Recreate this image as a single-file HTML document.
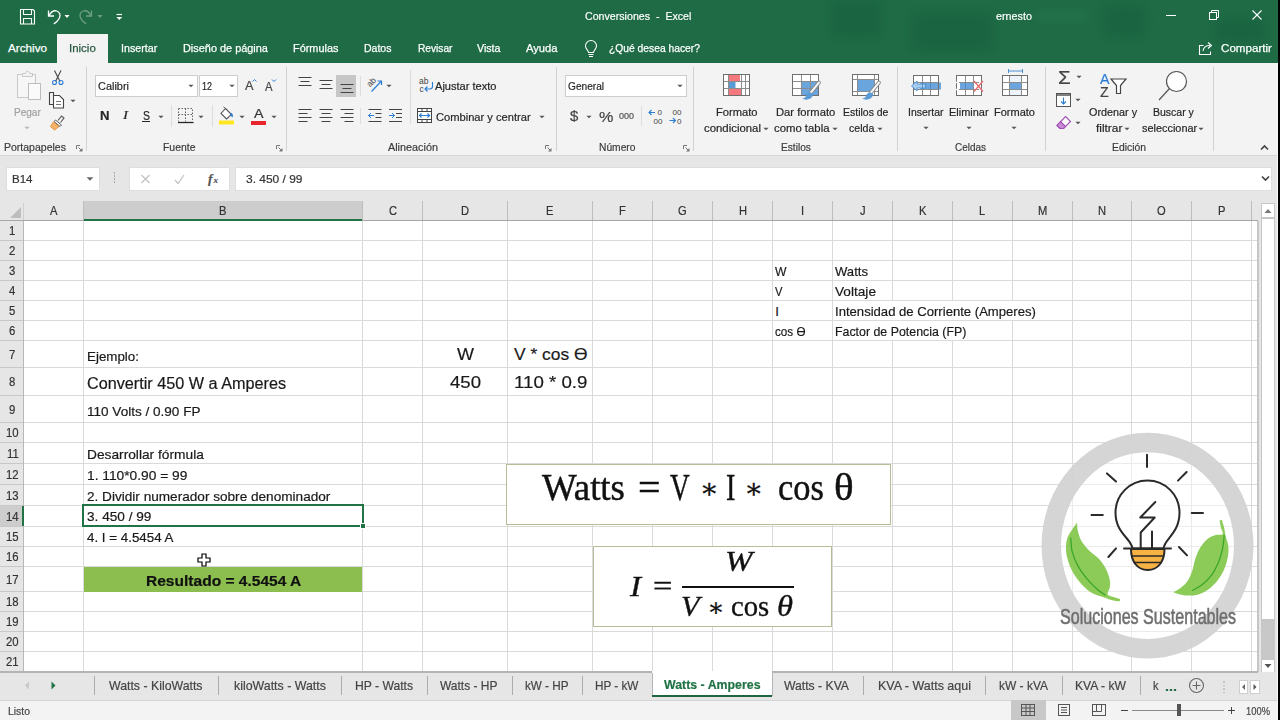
<!DOCTYPE html>
<html lang="es"><head><meta charset="utf-8"><title>Conversiones - Excel</title>
<style>
html,body{margin:0;padding:0;}
body{width:1280px;height:720px;overflow:hidden;position:relative;background:#e6e6e6;font-family:"Liberation Sans",sans-serif;}
.t{position:absolute;white-space:pre;transform-origin:0 50%;-webkit-text-stroke-width:.2px;}
.b{position:absolute;}
svg{position:absolute;overflow:visible;}
</style></head><body>

<!-- title bar -->
<div class="b" style="left:0px;top:0px;width:1280px;height:63px;background:#1e6b45;"></div>
<svg style="left:0;top:0" width="1280" height="63" viewBox="0 0 1280 63"><defs><filter id="tb"><feGaussianBlur stdDeviation="4"/></filter></defs><g filter="url(#tb)" fill="#17553a" opacity=".3"><rect x="832" y="2" width="48" height="34"/><rect x="912" y="14" width="80" height="36"/><rect x="1105" y="6" width="40" height="30"/><rect x="1215" y="20" width="50" height="22"/></g><rect x="1036" y="9" width="52" height="14" fill="#2a7a53" opacity=".35" filter="url(#tb)"/></svg>
<span class="t" style="left:585.0px;top:8.6px;font-size:11.7px;line-height:14px;color:#fff;font-family:'Liberation Sans',sans-serif;transform:scaleX(0.910);">Conversiones  -  Excel</span>
<span class="t" style="left:995.5px;top:8.6px;font-size:11.7px;line-height:14px;color:#fff;font-family:'Liberation Sans',sans-serif;transform:scaleX(0.922);">ernesto</span>
<svg style="left:0;top:0" width="140" height="32" viewBox="0 0 140 32" fill="none" stroke="#fff" stroke-width="1.1">
<path d="M20.5 9.5h12.5l1.5 1.5v13h-14z"/><path d="M23.5 9.5v5h8v-5"/><path d="M23.5 24v-5.5h8V24"/>
<path d="M48.5 10.5v5.5h5.5" stroke-width="1.3"/><path d="M48.8 15.8c2-3.6 5.2-5.6 8-4.8 3 .9 4 4.200 2.500 7.300-1 2.100-3 4-5.500 5.600" stroke-width="1.3"/>
<path d="M64.500 15l2.500 3 2.500-3z" fill="#fff" stroke="none"/>
<g opacity=".35"><path d="M91.500 10.500v5.500h-5.500" stroke-width="1.300"/><path d="M91.200 15.800c-2-3.600-5.200-5.600-8-4.800-3 .9-4 4.200-2.500 7.300 1 2.100 3 4 5.500 5.600" stroke-width="1.3"/><path d="M97.500 15l2.500 3 2.500-3z" fill="#fff" stroke="none"/></g>
<path d="M116.500 14.500h5.500" stroke-width="1.2"/><path d="M116.300 17l3 3 3-3z" fill="#fff" stroke="none"/>
</svg>
<svg style="left:1150px;top:-1px" width="130" height="32" viewBox="0 0 130 32" fill="none" stroke="#fff" stroke-width="1">
<path d="M16 16.500h10"/>
<rect x="59.500" y="13.500" width="7" height="7"/><path d="M61.500 13.500v-2h7v7h-2"/>
<path d="M102.500 11.500l9 9M111.500 11.500l-9 9" stroke-width="1.1"/>
</svg>
<div class="b" style="left:57px;top:34px;width:51px;height:30px;background:#f3f3f3;"></div>
<span class="t" style="left:8.0px;top:41.2px;font-size:11.7px;line-height:14px;color:#fff;font-family:'Liberation Sans',sans-serif;-webkit-text-stroke:.25px #fff;">Archivo</span>
<span class="t" style="left:68.7px;top:41.2px;font-size:11.7px;line-height:14px;color:#2a5a43;font-family:'Liberation Sans',sans-serif;transform:scaleX(0.981);-webkit-text-stroke:.25px #2a5a43;">Inicio</span>
<span class="t" style="left:120.7px;top:41.2px;font-size:11.7px;line-height:14px;color:#fff;font-family:'Liberation Sans',sans-serif;transform:scaleX(0.915);-webkit-text-stroke:.25px #fff;">Insertar</span>
<span class="t" style="left:182.5px;top:41.2px;font-size:11.7px;line-height:14px;color:#fff;font-family:'Liberation Sans',sans-serif;transform:scaleX(0.933);-webkit-text-stroke:.25px #fff;">Diseño de página</span>
<span class="t" style="left:293.0px;top:41.2px;font-size:11.7px;line-height:14px;color:#fff;font-family:'Liberation Sans',sans-serif;transform:scaleX(0.933);-webkit-text-stroke:.25px #fff;">Fórmulas</span>
<span class="t" style="left:364.0px;top:41.2px;font-size:11.7px;line-height:14px;color:#fff;font-family:'Liberation Sans',sans-serif;transform:scaleX(0.900);-webkit-text-stroke:.25px #fff;">Datos</span>
<span class="t" style="left:417.5px;top:41.2px;font-size:11.7px;line-height:14px;color:#fff;font-family:'Liberation Sans',sans-serif;transform:scaleX(0.870);-webkit-text-stroke:.25px #fff;">Revisar</span>
<span class="t" style="left:477.0px;top:41.2px;font-size:11.7px;line-height:14px;color:#fff;font-family:'Liberation Sans',sans-serif;transform:scaleX(0.911);-webkit-text-stroke:.25px #fff;">Vista</span>
<span class="t" style="left:526.0px;top:41.2px;font-size:11.7px;line-height:14px;color:#fff;font-family:'Liberation Sans',sans-serif;transform:scaleX(0.956);-webkit-text-stroke:.25px #fff;">Ayuda</span>
<span class="t" style="left:609.0px;top:41.2px;font-size:11.7px;line-height:14px;color:#fff;font-family:'Liberation Sans',sans-serif;transform:scaleX(0.880);-webkit-text-stroke:.25px #fff;">¿Qué desea hacer?</span>
<span class="t" style="left:1221.0px;top:41.2px;font-size:11.7px;line-height:14px;color:#fff;font-family:'Liberation Sans',sans-serif;transform:scaleX(0.993);-webkit-text-stroke:.25px #fff;">Compartir</span>
<svg style="left:583px;top:38px" width="16" height="22" viewBox="0 0 16 22" fill="none" stroke="#fff" stroke-width="1.1">
<path d="M5.500 14.500c0-2-3-3.500-3-6.500a5.500 5.500 0 0 1 11 0c0 3-3 4.500-3 6.500z"/><path d="M5.500 16.500h5M6 18.500h4"/></svg>
<svg style="left:1198px;top:40px" width="17" height="16" viewBox="0 0 17 16" fill="none" stroke="#fff" stroke-width="1.1">
<path d="M5.500 5.500h-4v9h11v-3"/><path d="M5 11c.5-3.500 3-5.500 7-5.500"/><path d="M10 2.500l3.500 3-3.500 3"/></svg>
<!-- ribbon -->
<div class="b" style="left:0px;top:63px;width:1280px;height:92px;background:#f3f3f3;"></div>
<div class="b" style="left:0px;top:155px;width:1280px;height:1px;background:#d6d6d6;"></div>
<div class="b" style="left:86px;top:67px;width:1px;height:84px;background:#d2d2d2;"></div>
<div class="b" style="left:286px;top:67px;width:1px;height:84px;background:#d2d2d2;"></div>
<div class="b" style="left:556px;top:67px;width:1px;height:84px;background:#d2d2d2;"></div>
<div class="b" style="left:693px;top:67px;width:1px;height:84px;background:#d2d2d2;"></div>
<div class="b" style="left:897px;top:67px;width:1px;height:84px;background:#d2d2d2;"></div>
<div class="b" style="left:1045px;top:67px;width:1px;height:84px;background:#d2d2d2;"></div>
<div class="b" style="left:1213px;top:67px;width:1px;height:84px;background:#d2d2d2;"></div>
<div class="b" style="left:171px;top:105px;width:1px;height:22px;background:#dcdcdc;"></div>
<div class="b" style="left:212px;top:105px;width:1px;height:22px;background:#dcdcdc;"></div>
<div class="b" style="left:360px;top:76px;width:1px;height:20px;background:#dcdcdc;"></div>
<div class="b" style="left:360px;top:108px;width:1px;height:16px;background:#dcdcdc;"></div>
<div class="b" style="left:410px;top:70px;width:1px;height:54px;background:#dcdcdc;"></div>
<div class="b" style="left:641px;top:106px;width:1px;height:20px;background:#dcdcdc;"></div>
<span class="t" style="left:4.0px;top:140.1px;font-size:11.7px;line-height:14px;color:#3b3b3b;font-family:'Liberation Sans',sans-serif;transform:scaleX(0.899);">Portapapeles</span>
<span class="t" style="left:162.5px;top:140.1px;font-size:11.7px;line-height:14px;color:#3b3b3b;font-family:'Liberation Sans',sans-serif;transform:scaleX(0.892);">Fuente</span>
<span class="t" style="left:388.0px;top:140.1px;font-size:11.7px;line-height:14px;color:#3b3b3b;font-family:'Liberation Sans',sans-serif;transform:scaleX(0.926);">Alineación</span>
<span class="t" style="left:598.5px;top:140.1px;font-size:11.7px;line-height:14px;color:#3b3b3b;font-family:'Liberation Sans',sans-serif;transform:scaleX(0.877);">Número</span>
<span class="t" style="left:780.8px;top:140.1px;font-size:11.7px;line-height:14px;color:#3b3b3b;font-family:'Liberation Sans',sans-serif;transform:scaleX(0.868);">Estilos</span>
<span class="t" style="left:955.0px;top:140.1px;font-size:11.7px;line-height:14px;color:#3b3b3b;font-family:'Liberation Sans',sans-serif;transform:scaleX(0.851);">Celdas</span>
<span class="t" style="left:1112.0px;top:140.1px;font-size:11.7px;line-height:14px;color:#3b3b3b;font-family:'Liberation Sans',sans-serif;transform:scaleX(0.886);">Edición</span>
<svg style="left:76px;top:144.5px" width="7" height="7" viewBox="0 0 7 7" fill="none" stroke="#777" stroke-width="1"><path d="M.5 4v-3.500h3.500"/><path d="M2.500 2.500l3.500 3.500"/><path d="M6.500 3v3.500h-3.500z" fill="#777" stroke="none"/></svg>
<svg style="left:276px;top:144.5px" width="7" height="7" viewBox="0 0 7 7" fill="none" stroke="#777" stroke-width="1"><path d="M.5 4v-3.500h3.500"/><path d="M2.500 2.500l3.500 3.500"/><path d="M6.500 3v3.500h-3.500z" fill="#777" stroke="none"/></svg>
<svg style="left:545px;top:144.5px" width="7" height="7" viewBox="0 0 7 7" fill="none" stroke="#777" stroke-width="1"><path d="M.5 4v-3.500h3.500"/><path d="M2.500 2.500l3.500 3.500"/><path d="M6.500 3v3.500h-3.500z" fill="#777" stroke="none"/></svg>
<svg style="left:683px;top:144.5px" width="7" height="7" viewBox="0 0 7 7" fill="none" stroke="#777" stroke-width="1"><path d="M.5 4v-3.500h3.500"/><path d="M2.500 2.500l3.500 3.500"/><path d="M6.500 3v3.500h-3.500z" fill="#777" stroke="none"/></svg>
<span class="t" style="left:13.7px;top:104.6px;font-size:11.7px;line-height:14px;color:#a0a0a0;font-family:'Liberation Sans',sans-serif;transform:scaleX(0.858);">Pegar</span>
<svg style="left:23px;top:124.5px" width="8" height="6" viewBox="-4 -3 8 6"><path d="M-2.6 -1.3h5.2l-2.6 2.6z" fill="#b5b5b5"/></svg>
<svg style="left:14px;top:68px" width="30" height="34" viewBox="0 0 30 34" fill="none">
<rect x="3.500" y="6.500" width="18" height="23" fill="#f6f6f6" stroke="#c8c8c8"/><path d="M8.500 8.500v-3h3c0-3 4-3 4 0h3v3z" fill="#f3f3f3" stroke="#c8c8c8"/>
<rect x="14.500" y="15.500" width="12" height="16" fill="#fafafa" stroke="#bdbdbd"/></svg>
<svg style="left:50px;top:68px" width="16" height="18" viewBox="0 0 16 18" fill="none" stroke="#444" stroke-width="1.1">
<path d="M4.500 2.500l5.500 11M11 2.500l-5.500 11"/><circle cx="4.500" cy="14.500" r="2" stroke="#2b7cd3"/><circle cx="11" cy="14.500" r="2" stroke="#2b7cd3"/></svg>
<svg style="left:48px;top:90px" width="18" height="20" viewBox="0 0 18 20" fill="none" stroke="#444" stroke-width="1.1">
<path d="M5.500 5.500v-3h-4v12h4"/><path d="M5.500 5.500h6l4 4v8.500h-10z" fill="#fff"/><path d="M8 11.500h5M8 14.500h5" stroke="#777"/></svg>
<svg style="left:68.5px;top:97.5px" width="8" height="6" viewBox="-4 -3 8 6"><path d="M-2.6 -1.3h5.2l-2.6 2.6z" fill="#555"/></svg>
<svg style="left:49px;top:114px" width="18" height="18" viewBox="0 0 18 18" fill="none">
<path d="M9 6.500l3.500-4.500 2.500 2-3.500 4.500" stroke="#555" stroke-width="1.100"/><path d="M6.500 6l6 5-1.500 1.500-6-5z" fill="#fff" stroke="#555"/><path d="M4.500 8l5.500 4.500-4.500 3.500-4-3.500z" fill="#f5b46b" stroke="#e8913a"/></svg>
<div class="b" style="left:95px;top:74.5px;width:102.5px;height:22px;background:#fff;border:1px solid #cdcdcd;box-sizing:border-box;"></div>
<div class="b" style="left:198.5px;top:74.5px;width:39.5px;height:22px;background:#fff;border:1px solid #cdcdcd;box-sizing:border-box;"></div>
<span class="t" style="left:98.0px;top:78.6px;font-size:11.7px;line-height:14px;color:#262626;font-family:'Liberation Sans',sans-serif;transform:scaleX(0.935);">Calibri</span>
<span class="t" style="left:202.0px;top:78.6px;font-size:11.7px;line-height:14px;color:#262626;font-family:'Liberation Sans',sans-serif;transform:scaleX(0.768);">12</span>
<svg style="left:187px;top:82.5px" width="8" height="6" viewBox="-4 -3 8 6"><path d="M-2.6 -1.3h5.2l-2.6 2.6z" fill="#555"/></svg>
<svg style="left:227.5px;top:82.5px" width="8" height="6" viewBox="-4 -3 8 6"><path d="M-2.6 -1.3h5.2l-2.6 2.6z" fill="#555"/></svg>
<span class="t" style="left:244.5px;top:78.2px;font-size:13.5px;line-height:16px;color:#444;font-family:'Liberation Sans',sans-serif;transform:scaleX(0.944);">A</span>
<span class="t" style="left:264.5px;top:79.6px;font-size:12px;line-height:14px;color:#444;font-family:'Liberation Sans',sans-serif;transform:scaleX(0.937);">A</span>
<svg style="left:252px;top:78px" width="26" height="8" viewBox="0 0 26 8" fill="none" stroke="#2b7cd3" stroke-width="1"><path d="M.5 3.500l2-2 2 2"/><path d="M20 1.500l2 2 2-2"/></svg>
<span class="t" style="left:99.5px;top:107.6px;font-size:13px;line-height:16px;color:#262626;font-family:'Liberation Sans',sans-serif;font-weight:bold;transform:scaleX(1.012);">N</span>
<span class="t" style="left:123.0px;top:107.4px;font-size:13.5px;line-height:16px;color:#262626;font-family:'Liberation Serif',serif;font-style:italic;transform:scaleX(1.112);">I</span>
<span class="t" style="left:142.5px;top:107.6px;font-size:13px;line-height:16px;color:#262626;font-family:'Liberation Sans',sans-serif;transform:scaleX(0.807);">S</span>
<div class="b" style="left:142px;top:120.8px;width:8px;height:1px;background:#262626;"></div>
<svg style="left:157px;top:113.5px" width="8" height="6" viewBox="-4 -3 8 6"><path d="M-2.6 -1.3h5.2l-2.6 2.6z" fill="#555"/></svg>
<svg style="left:178px;top:108px" width="16" height="16" viewBox="0 0 16 16" fill="none" stroke="#666" stroke-width="1" stroke-dasharray="1.500 1.500">
<path d="M.5 .5h14v12.500M.5 .5v13M7.500 .5v13M.5 6.500h14"/><path d="M0 14.500h15.500" stroke="#262626" stroke-dasharray="none" stroke-width="1.300"/></svg>
<svg style="left:197px;top:113.5px" width="8" height="6" viewBox="-4 -3 8 6"><path d="M-2.6 -1.3h5.2l-2.6 2.6z" fill="#555"/></svg>
<svg style="left:218px;top:106px" width="18" height="20" viewBox="0 0 18 20" fill="none">
<path d="M7.500 2.500l6 6-5 4.500-5.500-5.500z" fill="#fff" stroke="#555" stroke-width="1.100"/><path d="M7.500 2.500l-2-1.500" stroke="#555"/><path d="M12.500 7c2 0 3 2 2 4.500-1-1-2-2-2.500-3.500z" fill="#2b7cd3"/><rect x="1" y="14.500" width="15" height="4" fill="#ffe522"/></svg>
<svg style="left:237.5px;top:113.5px" width="8" height="6" viewBox="-4 -3 8 6"><path d="M-2.6 -1.3h5.2l-2.6 2.6z" fill="#555"/></svg>
<span class="t" style="left:254.0px;top:105.7px;font-size:13.5px;line-height:16px;color:#333;font-family:'Liberation Sans',sans-serif;transform:scaleX(1.055);">A</span>
<div class="b" style="left:251px;top:120.5px;width:15px;height:4px;background:#e8262d;"></div>
<svg style="left:269.5px;top:113.5px" width="8" height="6" viewBox="-4 -3 8 6"><path d="M-2.6 -1.3h5.2l-2.6 2.6z" fill="#555"/></svg>
<div class="b" style="left:336px;top:75px;width:20px;height:22px;background:#c6c6c6;"></div>
<svg style="left:298px;top:76px" width="16" height="16" viewBox="0 0 16 16" fill="none" stroke="#444" stroke-width="1"><path d="M0.5 1.5h13M2.5 5.5h9M0.5 9.5h13"/></svg>
<svg style="left:319px;top:79px" width="16" height="16" viewBox="0 0 16 16" fill="none" stroke="#444" stroke-width="1"><path d="M0.5 1.5h13M2.5 5.5h9M0.5 9.5h13"/></svg>
<svg style="left:339.5px;top:83px" width="16" height="16" viewBox="0 0 16 16" fill="none" stroke="#444" stroke-width="1"><path d="M0.5 1.5h13M2.5 5.5h9M0.5 9.5h13"/></svg>
<svg style="left:298px;top:108px" width="16" height="16" viewBox="0 0 16 16" fill="none" stroke="#444" stroke-width="1"><path d="M0.5 1.5h13M0.5 5.5h9M0.5 9.5h13M0.5 13.5h9"/></svg>
<svg style="left:319px;top:108px" width="16" height="16" viewBox="0 0 16 16" fill="none" stroke="#444" stroke-width="1"><path d="M0.5 1.5h13M2.5 5.5h9M0.5 9.5h13M2.5 13.5h9"/></svg>
<svg style="left:339.5px;top:108px" width="16" height="16" viewBox="0 0 16 16" fill="none" stroke="#444" stroke-width="1"><path d="M0.5 1.5h13M4.5 5.5h9M0.5 9.5h13M4.5 13.5h9"/></svg>
<svg style="left:367px;top:76px" width="18" height="18" viewBox="0 0 18 18" fill="none">
<text x="1" y="9" font-family="Liberation Sans, sans-serif" font-size="8.500" fill="#444" transform="rotate(-45 5 8)">ab</text><path d="M4.500 15.500l10-10.500M10.500 5h4v4" stroke="#2b7cd3" stroke-width="1.200"/></svg>
<svg style="left:384.5px;top:83px" width="8" height="6" viewBox="-4 -3 8 6"><path d="M-2.6 -1.3h5.2l-2.6 2.6z" fill="#555"/></svg>
<svg style="left:368px;top:108px" width="36" height="16" viewBox="0 0 36 16" fill="none" stroke="#444" stroke-width="1">
<path d="M.5 1.500h13M7.500 5.500h6M7.500 9.500h6M.5 13.500h13"/><path d="M6 7.500h-5.500M3 5l-2.500 2.500 2.500 2.500" stroke="#2b7cd3"/>
<path d="M21 1.500h13M28 5.500h6M28 9.500h6M21 13.500h13"/><path d="M21 7.500h5.500M24 5l2.500 2.500-2.500 2.500" stroke="#2b7cd3"/></svg>
<svg style="left:419px;top:76px" width="16" height="18" viewBox="0 0 16 18" fill="none">
<text x="0" y="8" font-family="Liberation Sans, sans-serif" font-size="8.500" fill="#444">ab</text><text x="0.500" y="16" font-family="Liberation Sans, sans-serif" font-size="8.500" fill="#444">c</text>
<path d="M13.500 6v4.500c0 2-1.500 2.500-3 2.500h-4M8.500 10.500l-2.500 2.500 2.500 2.500" stroke="#2b7cd3" stroke-width="1.100"/></svg>
<span class="t" style="left:435.0px;top:79.1px;font-size:11.7px;line-height:14px;color:#262626;font-family:'Liberation Sans',sans-serif;transform:scaleX(0.947);">Ajustar texto</span>
<svg style="left:417px;top:108px" width="15" height="15" viewBox="0 0 15 15" fill="none" stroke="#444" stroke-width="1">
<rect x=".5" y=".5" width="14" height="14" fill="#fff"/><path d="M.5 3.500h14M.5 11.500h14M5 .5v3M10 .5v3M5 11.500v3M10 11.500v3"/><path d="M2.500 7.500h10M4.500 5.500l-2 2 2 2M10.500 5.500l2 2-2 2" stroke="#2b7cd3" stroke-width="1.200"/></svg>
<span class="t" style="left:435.8px;top:109.6px;font-size:11.7px;line-height:14px;color:#262626;font-family:'Liberation Sans',sans-serif;transform:scaleX(0.952);">Combinar y centrar</span>
<svg style="left:538px;top:114px" width="8" height="6" viewBox="-4 -3 8 6"><path d="M-2.6 -1.3h5.2l-2.6 2.6z" fill="#555"/></svg>
<div class="b" style="left:564.5px;top:74.5px;width:122px;height:22px;background:#fff;border:1px solid #cdcdcd;box-sizing:border-box;"></div>
<span class="t" style="left:567.5px;top:78.6px;font-size:11.7px;line-height:14px;color:#262626;font-family:'Liberation Sans',sans-serif;transform:scaleX(0.867);">General</span>
<svg style="left:675.5px;top:82.5px" width="8" height="6" viewBox="-4 -3 8 6"><path d="M-2.6 -1.3h5.2l-2.6 2.6z" fill="#555"/></svg>
<span class="t" style="left:569.7px;top:107.2px;font-size:15px;line-height:18px;color:#444;font-family:'Liberation Sans',sans-serif;transform:scaleX(0.995);">$</span>
<svg style="left:585.4px;top:113.5px" width="8" height="6" viewBox="-4 -3 8 6"><path d="M-2.6 -1.3h5.2l-2.6 2.6z" fill="#555"/></svg>
<span class="t" style="left:599.0px;top:106.7px;font-size:15.5px;line-height:19px;color:#444;font-family:'Liberation Sans',sans-serif;transform:scaleX(1.045);">%</span>
<span class="t" style="left:619.0px;top:110.6px;font-size:8.5px;line-height:10px;color:#555;font-family:'Liberation Sans',sans-serif;transform:scaleX(1.058);">000</span>
<svg style="left:648px;top:108px" width="38" height="18" viewBox="0 0 38 18" fill="none">
<g font-family="Liberation Sans, sans-serif" font-size="8" fill="#444"><text x="9.500" y="7">0</text><text x="5.500" y="15.500">00</text><text x="24.500" y="7">00</text><text x="29" y="15.500">0</text></g>
<path d="M7 4.500h-6M3.500 2l-2.500 2.500 2.500 2.500" stroke="#2b7cd3" stroke-width="1.100"/><path d="M21.500 12.500h6M25 10l2.500 2.500-2.500 2.500" stroke="#2b7cd3" stroke-width="1.100"/></svg>
<svg style="left:723px;top:74px" width="27" height="22" viewBox="0 0 27 22" fill="none"><rect x=".5" y=".5" width="26" height="21" fill="#fff"/><rect x="6" y="1" width="11" height="6.500" fill="#f4787d"/><rect x="6" y="7.500" width="6.500" height="7" fill="#5b9bd5"/><rect x="6" y="14.500" width="12" height="7" fill="#f4787d"/><path d="M5.5 .5v21M18.5 .5v21M22.5 .5v21M.5 7.5h26M.5 14.5h26" stroke="#8c8c8c" stroke-width="1"/><rect x=".5" y=".5" width="26" height="21" stroke="#6e6e6e"/></svg>
<svg style="left:792px;top:74px" width="27" height="22" viewBox="0 0 27 22" fill="none"><rect x=".5" y=".5" width="26" height="21" fill="#fff"/><rect x="9.500" y="7.500" width="17" height="14" fill="#6aa5de"/><path d="M9.5 .5v21M18.5 .5v21M.5 7.5h26M.5 14.5h26" stroke="#8c8c8c" stroke-width="1"/><rect x=".5" y=".5" width="26" height="21" stroke="#6e6e6e"/><path d="M27 8.5l-8.5 10.5" stroke="#808080" stroke-width="3.600" stroke-linecap="round"/><path d="M27 8.5l-8.5 10.5" stroke="#f4f4f4" stroke-width="2" stroke-linecap="round"/><path d="M18.5 18.5c-2.500 0-4 1.500-4.500 3.500-.5 1.500-2 2.300-4 2.500 2.500 1.500 6 1.500 8.500 0 2-1.500 3-3.500 2.500-5z" fill="#5b9bd5"/></svg>
<svg style="left:852px;top:74px" width="27" height="22" viewBox="0 0 27 22" fill="none"><rect x=".5" y=".5" width="26" height="21" fill="#fff"/><rect x="5.500" y="5.500" width="17" height="12" fill="#6aa5de"/><path d="M5.5 .5v21M22.5 .5v21M.5 5.5h26M.5 17.5h26" stroke="#8c8c8c" stroke-width="1"/><rect x=".5" y=".5" width="26" height="21" stroke="#6e6e6e"/><path d="M27 8.5l-8.5 10.5" stroke="#808080" stroke-width="3.600" stroke-linecap="round"/><path d="M27 8.5l-8.5 10.5" stroke="#f4f4f4" stroke-width="2" stroke-linecap="round"/><path d="M18.5 18.5c-2.500 0-4 1.500-4.500 3.500-.5 1.500-2 2.300-4 2.500 2.500 1.500 6 1.500 8.500 0 2-1.500 3-3.500 2.500-5z" fill="#5b9bd5"/></svg>
<span class="t" style="left:715.8px;top:105.1px;font-size:11.7px;line-height:14px;color:#262626;font-family:'Liberation Sans',sans-serif;transform:scaleX(0.955);">Formato</span>
<span class="t" style="left:704.0px;top:120.9px;font-size:11.7px;line-height:14px;color:#262626;font-family:'Liberation Sans',sans-serif;transform:scaleX(0.974);">condicional</span>
<span class="t" style="left:775.7px;top:105.1px;font-size:11.7px;line-height:14px;color:#262626;font-family:'Liberation Sans',sans-serif;transform:scaleX(0.960);">Dar formato</span>
<span class="t" style="left:774.0px;top:120.9px;font-size:11.7px;line-height:14px;color:#262626;font-family:'Liberation Sans',sans-serif;transform:scaleX(0.970);">como tabla</span>
<span class="t" style="left:842.5px;top:105.1px;font-size:11.7px;line-height:14px;color:#262626;font-family:'Liberation Sans',sans-serif;transform:scaleX(0.897);">Estilos de</span>
<span class="t" style="left:849.0px;top:120.9px;font-size:11.7px;line-height:14px;color:#262626;font-family:'Liberation Sans',sans-serif;transform:scaleX(0.908);">celda</span>
<span class="t" style="left:907.7px;top:105.1px;font-size:11.7px;line-height:14px;color:#262626;font-family:'Liberation Sans',sans-serif;transform:scaleX(0.898);">Insertar</span>
<span class="t" style="left:949.0px;top:105.1px;font-size:11.7px;line-height:14px;color:#262626;font-family:'Liberation Sans',sans-serif;transform:scaleX(0.937);">Eliminar</span>
<span class="t" style="left:994.0px;top:105.1px;font-size:11.7px;line-height:14px;color:#262626;font-family:'Liberation Sans',sans-serif;transform:scaleX(0.941);">Formato</span>
<span class="t" style="left:1088.6px;top:105.1px;font-size:11.7px;line-height:14px;color:#262626;font-family:'Liberation Sans',sans-serif;transform:scaleX(0.925);">Ordenar y</span>
<span class="t" style="left:1095.6px;top:120.9px;font-size:11.7px;line-height:14px;color:#262626;font-family:'Liberation Sans',sans-serif;transform:scaleX(1.015);">filtrar</span>
<span class="t" style="left:1152.7px;top:105.1px;font-size:11.7px;line-height:14px;color:#262626;font-family:'Liberation Sans',sans-serif;transform:scaleX(0.899);">Buscar y</span>
<span class="t" style="left:1141.8px;top:120.9px;font-size:11.7px;line-height:14px;color:#262626;font-family:'Liberation Sans',sans-serif;transform:scaleX(0.933);">seleccionar</span>
<svg style="left:762px;top:125.5px" width="8" height="6" viewBox="-4 -3 8 6"><path d="M-2.6 -1.3h5.2l-2.6 2.6z" fill="#555"/></svg>
<svg style="left:831px;top:125.5px" width="8" height="6" viewBox="-4 -3 8 6"><path d="M-2.6 -1.3h5.2l-2.6 2.6z" fill="#555"/></svg>
<svg style="left:876px;top:125.5px" width="8" height="6" viewBox="-4 -3 8 6"><path d="M-2.6 -1.3h5.2l-2.6 2.6z" fill="#555"/></svg>
<svg style="left:921.6px;top:125px" width="8" height="6" viewBox="-4 -3 8 6"><path d="M-2.6 -1.3h5.2l-2.6 2.6z" fill="#555"/></svg>
<svg style="left:964.5px;top:125px" width="8" height="6" viewBox="-4 -3 8 6"><path d="M-2.6 -1.3h5.2l-2.6 2.6z" fill="#555"/></svg>
<svg style="left:1010px;top:125px" width="8" height="6" viewBox="-4 -3 8 6"><path d="M-2.6 -1.3h5.2l-2.6 2.6z" fill="#555"/></svg>
<svg style="left:1123px;top:125.5px" width="8" height="6" viewBox="-4 -3 8 6"><path d="M-2.6 -1.3h5.2l-2.6 2.6z" fill="#555"/></svg>
<svg style="left:1197px;top:125.5px" width="8" height="6" viewBox="-4 -3 8 6"><path d="M-2.6 -1.3h5.2l-2.6 2.6z" fill="#555"/></svg>
<svg style="left:913px;top:74.5px" width="26" height="21" viewBox="0 0 26 21" fill="none"><rect x=".5" y=".5" width="25" height="20" fill="#fff"/><rect x="7" y="7.500" width="21" height="7" fill="#6aa5de"/><path d="M9.5 .5v20M17.5 .5v20M.5 7.5h25M.5 14.5h25" stroke="#8c8c8c" stroke-width="1"/><rect x=".5" y=".5" width="25" height="20" stroke="#6e6e6e"/><path d="M-1.500 11l5.500-5v3h8.500v4h-8.500v3z" fill="#a9cdf0" stroke="#4a90d6" stroke-width=".9"/><path d="M9.500 7.500v7M17.500 7.500v7" stroke="#4a86c5" stroke-width=".8"/></svg>
<svg style="left:956px;top:74.5px" width="26" height="21" viewBox="0 0 26 21" fill="none"><rect x=".5" y=".5" width="25" height="20" fill="#fff"/><rect x="4" y="7.500" width="14" height="7" fill="#6aa5de"/><path d="M9.5 .5v20M17.5 .5v20M.5 7.5h25M.5 14.5h25" stroke="#8c8c8c" stroke-width="1"/><rect x=".5" y=".5" width="25" height="20" stroke="#6e6e6e"/><path d="M0 7.500h3M0 14.500h3M23 7.500h3M23 14.500h3" stroke="#f3f3f3" stroke-width="1.500"/><path d="M9.500 7.500v7" stroke="#4a86c5" stroke-width=".8"/><path d="M18 6l9 10.500M27 6l-9 10.500" stroke="#e9686f" stroke-width="1.300"/></svg>
<svg style="left:1002px;top:74.5px" width="26" height="21" viewBox="0 0 26 21" fill="none"><rect x=".5" y=".5" width="25" height="20" fill="#fff"/><rect x="7.500" y="7.500" width="12" height="7" fill="#6aa5de"/><rect x="7.500" y="1" width="12" height="6.500" fill="#edf3fa"/><rect x="7.500" y="14.500" width="12" height="6" fill="#edf3fa"/><path d="M7.5 .5v20M19.5 .5v20M.5 7.5h25M.5 14.5h25" stroke="#8c8c8c" stroke-width="1"/><rect x=".5" y=".5" width="25" height="20" stroke="#6e6e6e"/><path d="M6 -4h15M6.500 -6v4M20.500 -6v4" stroke="#4a90d6" stroke-width="1"/></svg>
<span class="t" style="left:1057.6px;top:66.5px;font-size:18px;line-height:22px;color:#444;font-family:'Liberation Sans',sans-serif;transform:scaleX(1.141);">Σ</span>
<svg style="left:1075px;top:74px" width="8" height="6" viewBox="-4 -3 8 6"><path d="M-2.6 -1.3h5.2l-2.6 2.6z" fill="#555"/></svg>
<svg style="left:1056px;top:93px" width="16" height="14" viewBox="0 0 16 14" fill="none"><rect x=".5" y=".5" width="14" height="13" fill="#fff" stroke="#555"/><path d="M.5 2h14" stroke="#555" stroke-width="1.500"/><path d="M7.500 4.500v6M5 8.500l2.500 2.500 2.500-2.500" stroke="#2b7cd3" stroke-width="1.100"/></svg>
<svg style="left:1073.7px;top:97px" width="8" height="6" viewBox="-4 -3 8 6"><path d="M-2.6 -1.3h5.2l-2.6 2.6z" fill="#555"/></svg>
<svg style="left:1056px;top:115px" width="16" height="16" viewBox="0 0 16 16" fill="none"><path d="M9.500 1.500l5 5-7 7h-3.500l-3-3z" fill="#fff" stroke="#a14fb5" stroke-width="1.100"/><path d="M4.500 6.500l5 5-2 2h-3.500l-3-3z" fill="#c98ad6" stroke="#a14fb5" stroke-width="1.100"/></svg>
<svg style="left:1073.7px;top:120px" width="8" height="6" viewBox="-4 -3 8 6"><path d="M-2.6 -1.3h5.2l-2.6 2.6z" fill="#555"/></svg>
<span class="t" style="left:1099.5px;top:69.5px;font-size:15.3px;line-height:18px;color:#2b7cd3;font-family:'Liberation Sans',sans-serif;transform:scaleX(0.931);">A</span>
<span class="t" style="left:1099.8px;top:83.0px;font-size:15.3px;line-height:18px;color:#444;font-family:'Liberation Sans',sans-serif;transform:scaleX(0.931);">Z</span>
<svg style="left:1110px;top:77px" width="18" height="18" viewBox="0 0 18 18" fill="none" stroke="#444" stroke-width="1.200"><path d="M1 2h15l-5.500 6.500v8h-4v-8z" fill="#fff"/></svg>
<svg style="left:1158px;top:70px" width="30" height="31" viewBox="0 0 30 31" fill="none" stroke="#555" stroke-width="1.200"><circle cx="18.500" cy="11.500" r="10" fill="#fff"/><path d="M11.500 18.500l-10.500 11.500"/></svg>
<svg style="left:1260px;top:143.500px" width="9" height="7" viewBox="0 0 9 7" fill="none" stroke="#444" stroke-width="1.700"><path d="M1 5.500l3.500-3.500 3.500 3.500"/></svg>
<!-- formula bar -->
<div class="b" style="left:5.5px;top:167px;width:94px;height:24px;background:#fff;border:1px solid #dedede;box-sizing:border-box;"></div>
<div class="b" style="left:129px;top:167px;width:101px;height:24px;background:#fff;border:1px solid #dedede;box-sizing:border-box;"></div>
<div class="b" style="left:235px;top:167px;width:1037px;height:24px;background:#fff;border:1px solid #dedede;box-sizing:border-box;"></div>
<span class="t" style="left:11.5px;top:172.3px;font-size:11.7px;line-height:14px;color:#333;font-family:'Liberation Sans',sans-serif;transform:scaleX(0.985);">B14</span>
<svg style="left:86px;top:175.5px" width="8" height="6" viewBox="-4 -3 8 6"><path d="M-3.3800000000000003 -1.6900000000000002h6.760000000000001l-3.3800000000000003 3.3800000000000003z" fill="#666"/></svg>
<div class="b" style="left:113.5px;top:172px;width:1px;height:1.5px;background:#aaa;"></div>
<div class="b" style="left:113.5px;top:175px;width:1px;height:1.5px;background:#aaa;"></div>
<div class="b" style="left:113.5px;top:178px;width:1px;height:1.5px;background:#aaa;"></div>
<div class="b" style="left:113.5px;top:181px;width:1px;height:1.5px;background:#aaa;"></div>
<svg style="left:129px;top:167px" width="101" height="24" viewBox="0 0 101 24" fill="none" stroke="#c2c2c2" stroke-width="1.200"><path d="M12.500 8l8 8M20.500 8l-8 8"/><path d="M46 13l3 3.500 6-8.500"/></svg>
<span class="t" style="left:208.0px;top:170.9px;font-size:13.5px;line-height:16px;color:#555;font-family:'Liberation Serif',serif;font-weight:bold;font-style:italic;">f</span>
<span class="t" style="left:213.5px;top:175.4px;font-size:9px;line-height:11px;color:#555;font-family:'Liberation Serif',serif;font-weight:bold;font-style:italic;">x</span>
<span class="t" style="left:245.5px;top:172.3px;font-size:11.7px;line-height:14px;color:#333;font-family:'Liberation Sans',sans-serif;transform:scaleX(1.022);">3. 450 / 99</span>
<svg style="left:1261px;top:175px" width="9" height="7" viewBox="0 0 9 7" fill="none" stroke="#444" stroke-width="1.700"><path d="M1 1.500l3.500 3.500 3.500-3.500"/></svg>
<!-- sheet -->
<div class="b" style="left:0px;top:201px;width:1258px;height:471px;background:#fff;"></div>
<div class="b" style="left:0px;top:201px;width:1258px;height:19px;background:#e6e6e6;"></div>
<div class="b" style="left:0px;top:201px;width:23px;height:471px;background:#e6e6e6;"></div>
<div class="b" style="left:83px;top:201px;width:279px;height:19px;background:#cdcdcd;"></div>
<div class="b" style="left:0px;top:505px;width:23px;height:21px;background:#cdcdcd;"></div>
<div class="b" style="left:83px;top:221px;width:1px;height:451px;background:#dadada;"></div><div class="b" style="left:362px;top:221px;width:1px;height:451px;background:#dadada;"></div><div class="b" style="left:422px;top:221px;width:1px;height:451px;background:#dadada;"></div><div class="b" style="left:507px;top:221px;width:1px;height:451px;background:#dadada;"></div><div class="b" style="left:592px;top:221px;width:1px;height:451px;background:#dadada;"></div><div class="b" style="left:652px;top:221px;width:1px;height:451px;background:#dadada;"></div><div class="b" style="left:712px;top:221px;width:1px;height:451px;background:#dadada;"></div><div class="b" style="left:772px;top:221px;width:1px;height:451px;background:#dadada;"></div><div class="b" style="left:832px;top:221px;width:1px;height:451px;background:#dadada;"></div><div class="b" style="left:892px;top:221px;width:1px;height:451px;background:#dadada;"></div><div class="b" style="left:952px;top:221px;width:1px;height:451px;background:#dadada;"></div><div class="b" style="left:1012px;top:221px;width:1px;height:451px;background:#dadada;"></div><div class="b" style="left:1072px;top:221px;width:1px;height:451px;background:#dadada;"></div><div class="b" style="left:1131px;top:221px;width:1px;height:451px;background:#dadada;"></div><div class="b" style="left:1191px;top:221px;width:1px;height:451px;background:#dadada;"></div><div class="b" style="left:1251px;top:221px;width:1px;height:451px;background:#dadada;"></div><div class="b" style="left:24px;top:240px;width:1233px;height:1px;background:#dadada;"></div><div class="b" style="left:24px;top:260px;width:1233px;height:1px;background:#dadada;"></div><div class="b" style="left:24px;top:280px;width:1233px;height:1px;background:#dadada;"></div><div class="b" style="left:24px;top:300px;width:1233px;height:1px;background:#dadada;"></div><div class="b" style="left:24px;top:320px;width:1233px;height:1px;background:#dadada;"></div><div class="b" style="left:24px;top:340px;width:1233px;height:1px;background:#dadada;"></div><div class="b" style="left:24px;top:367px;width:1233px;height:1px;background:#dadada;"></div><div class="b" style="left:24px;top:395px;width:1233px;height:1px;background:#dadada;"></div><div class="b" style="left:24px;top:422px;width:1233px;height:1px;background:#dadada;"></div><div class="b" style="left:24px;top:442px;width:1233px;height:1px;background:#dadada;"></div><div class="b" style="left:24px;top:463px;width:1233px;height:1px;background:#dadada;"></div><div class="b" style="left:24px;top:484px;width:1233px;height:1px;background:#dadada;"></div><div class="b" style="left:24px;top:505px;width:1233px;height:1px;background:#dadada;"></div><div class="b" style="left:24px;top:526px;width:1233px;height:1px;background:#dadada;"></div><div class="b" style="left:24px;top:546px;width:1233px;height:1px;background:#dadada;"></div><div class="b" style="left:24px;top:566px;width:1233px;height:1px;background:#dadada;"></div><div class="b" style="left:24px;top:591px;width:1233px;height:1px;background:#dadada;"></div><div class="b" style="left:24px;top:611px;width:1233px;height:1px;background:#dadada;"></div><div class="b" style="left:24px;top:631px;width:1233px;height:1px;background:#dadada;"></div><div class="b" style="left:24px;top:651px;width:1233px;height:1px;background:#dadada;"></div><div class="b" style="left:24px;top:671px;width:1233px;height:1px;background:#dadada;"></div>
<div class="b" style="left:892px;top:301px;width:1px;height:19px;background:#fff;"></div><div class="b" style="left:952px;top:301px;width:1px;height:19px;background:#fff;"></div><div class="b" style="left:1012px;top:301px;width:1px;height:19px;background:#fff;"></div><div class="b" style="left:892px;top:321px;width:1px;height:19px;background:#fff;"></div><div class="b" style="left:952px;top:321px;width:1px;height:19px;background:#fff;"></div>
<div class="b" style="left:83px;top:201px;width:1px;height:19px;background:#bdbdbd;"></div><div class="b" style="left:362px;top:201px;width:1px;height:19px;background:#bdbdbd;"></div><div class="b" style="left:422px;top:201px;width:1px;height:19px;background:#bdbdbd;"></div><div class="b" style="left:507px;top:201px;width:1px;height:19px;background:#bdbdbd;"></div><div class="b" style="left:592px;top:201px;width:1px;height:19px;background:#bdbdbd;"></div><div class="b" style="left:652px;top:201px;width:1px;height:19px;background:#bdbdbd;"></div><div class="b" style="left:712px;top:201px;width:1px;height:19px;background:#bdbdbd;"></div><div class="b" style="left:772px;top:201px;width:1px;height:19px;background:#bdbdbd;"></div><div class="b" style="left:832px;top:201px;width:1px;height:19px;background:#bdbdbd;"></div><div class="b" style="left:892px;top:201px;width:1px;height:19px;background:#bdbdbd;"></div><div class="b" style="left:952px;top:201px;width:1px;height:19px;background:#bdbdbd;"></div><div class="b" style="left:1012px;top:201px;width:1px;height:19px;background:#bdbdbd;"></div><div class="b" style="left:1072px;top:201px;width:1px;height:19px;background:#bdbdbd;"></div><div class="b" style="left:1131px;top:201px;width:1px;height:19px;background:#bdbdbd;"></div><div class="b" style="left:1191px;top:201px;width:1px;height:19px;background:#bdbdbd;"></div><div class="b" style="left:1251px;top:201px;width:1px;height:19px;background:#bdbdbd;"></div><div class="b" style="left:0px;top:240px;width:23px;height:1px;background:#c8c8c8;"></div><div class="b" style="left:0px;top:260px;width:23px;height:1px;background:#c8c8c8;"></div><div class="b" style="left:0px;top:280px;width:23px;height:1px;background:#c8c8c8;"></div><div class="b" style="left:0px;top:300px;width:23px;height:1px;background:#c8c8c8;"></div><div class="b" style="left:0px;top:320px;width:23px;height:1px;background:#c8c8c8;"></div><div class="b" style="left:0px;top:340px;width:23px;height:1px;background:#c8c8c8;"></div><div class="b" style="left:0px;top:367px;width:23px;height:1px;background:#c8c8c8;"></div><div class="b" style="left:0px;top:395px;width:23px;height:1px;background:#c8c8c8;"></div><div class="b" style="left:0px;top:422px;width:23px;height:1px;background:#c8c8c8;"></div><div class="b" style="left:0px;top:442px;width:23px;height:1px;background:#c8c8c8;"></div><div class="b" style="left:0px;top:463px;width:23px;height:1px;background:#c8c8c8;"></div><div class="b" style="left:0px;top:484px;width:23px;height:1px;background:#c8c8c8;"></div><div class="b" style="left:0px;top:505px;width:23px;height:1px;background:#c8c8c8;"></div><div class="b" style="left:0px;top:526px;width:23px;height:1px;background:#c8c8c8;"></div><div class="b" style="left:0px;top:546px;width:23px;height:1px;background:#c8c8c8;"></div><div class="b" style="left:0px;top:566px;width:23px;height:1px;background:#c8c8c8;"></div><div class="b" style="left:0px;top:591px;width:23px;height:1px;background:#c8c8c8;"></div><div class="b" style="left:0px;top:611px;width:23px;height:1px;background:#c8c8c8;"></div><div class="b" style="left:0px;top:631px;width:23px;height:1px;background:#c8c8c8;"></div><div class="b" style="left:0px;top:651px;width:23px;height:1px;background:#c8c8c8;"></div><div class="b" style="left:0px;top:671px;width:23px;height:1px;background:#c8c8c8;"></div><div class="b" style="left:23px;top:221px;width:1px;height:450px;background:#b8b8b8;"></div><div class="b" style="left:23px;top:203px;width:1px;height:17px;background:#cfcfcf;"></div><div class="b" style="left:0px;top:220px;width:1258px;height:1px;background:#a6a6a6;"></div>
<div class="b" style="left:84px;top:219px;width:278px;height:2px;background:#217346;"></div>
<div class="b" style="left:22px;top:506px;width:2px;height:20px;background:#217346;"></div>
<svg style="left:9px;top:206px" width="13" height="13" viewBox="0 0 13 13"><path d="M12 1v11h-11z" fill="#bdbdbd"/></svg>
<span class="t" style="left:50.3px;top:203.6px;font-size:12.4px;line-height:15px;color:#333;font-family:'Liberation Sans',sans-serif;transform:scaleX(0.900);">A</span>
<span class="t" style="left:219.3px;top:203.6px;font-size:12.4px;line-height:15px;color:#333;font-family:'Liberation Sans',sans-serif;transform:scaleX(0.900);">B</span>
<span class="t" style="left:388.5px;top:203.6px;font-size:12.4px;line-height:15px;color:#333;font-family:'Liberation Sans',sans-serif;transform:scaleX(0.900);">C</span>
<span class="t" style="left:461.0px;top:203.6px;font-size:12.4px;line-height:15px;color:#333;font-family:'Liberation Sans',sans-serif;transform:scaleX(0.900);">D</span>
<span class="t" style="left:546.3px;top:203.6px;font-size:12.4px;line-height:15px;color:#333;font-family:'Liberation Sans',sans-serif;transform:scaleX(0.900);">E</span>
<span class="t" style="left:619.1px;top:203.6px;font-size:12.4px;line-height:15px;color:#333;font-family:'Liberation Sans',sans-serif;transform:scaleX(0.900);">F</span>
<span class="t" style="left:678.2px;top:203.6px;font-size:12.4px;line-height:15px;color:#333;font-family:'Liberation Sans',sans-serif;transform:scaleX(0.900);">G</span>
<span class="t" style="left:738.5px;top:203.6px;font-size:12.4px;line-height:15px;color:#333;font-family:'Liberation Sans',sans-serif;transform:scaleX(0.900);">H</span>
<span class="t" style="left:800.9px;top:203.6px;font-size:12.4px;line-height:15px;color:#333;font-family:'Liberation Sans',sans-serif;transform:scaleX(0.900);">I</span>
<span class="t" style="left:859.7px;top:203.6px;font-size:12.4px;line-height:15px;color:#333;font-family:'Liberation Sans',sans-serif;transform:scaleX(0.900);">J</span>
<span class="t" style="left:918.8px;top:203.6px;font-size:12.4px;line-height:15px;color:#333;font-family:'Liberation Sans',sans-serif;transform:scaleX(0.900);">K</span>
<span class="t" style="left:979.4px;top:203.6px;font-size:12.4px;line-height:15px;color:#333;font-family:'Liberation Sans',sans-serif;transform:scaleX(0.900);">L</span>
<span class="t" style="left:1037.9px;top:203.6px;font-size:12.4px;line-height:15px;color:#333;font-family:'Liberation Sans',sans-serif;transform:scaleX(0.900);">M</span>
<span class="t" style="left:1098.0px;top:203.6px;font-size:12.4px;line-height:15px;color:#333;font-family:'Liberation Sans',sans-serif;transform:scaleX(0.900);">N</span>
<span class="t" style="left:1157.2px;top:203.6px;font-size:12.4px;line-height:15px;color:#333;font-family:'Liberation Sans',sans-serif;transform:scaleX(0.900);">O</span>
<span class="t" style="left:1217.8px;top:203.6px;font-size:12.4px;line-height:15px;color:#333;font-family:'Liberation Sans',sans-serif;transform:scaleX(0.900);">P</span>
<span class="t" style="left:8.5px;top:223.2px;font-size:13.2px;line-height:16px;color:#333;font-family:'Liberation Sans',sans-serif;transform:scaleX(0.860);">1</span>
<span class="t" style="left:8.5px;top:243.2px;font-size:13.2px;line-height:16px;color:#333;font-family:'Liberation Sans',sans-serif;transform:scaleX(0.860);">2</span>
<span class="t" style="left:8.5px;top:263.2px;font-size:13.2px;line-height:16px;color:#333;font-family:'Liberation Sans',sans-serif;transform:scaleX(0.860);">3</span>
<span class="t" style="left:8.5px;top:283.2px;font-size:13.2px;line-height:16px;color:#333;font-family:'Liberation Sans',sans-serif;transform:scaleX(0.860);">4</span>
<span class="t" style="left:8.5px;top:303.2px;font-size:13.2px;line-height:16px;color:#333;font-family:'Liberation Sans',sans-serif;transform:scaleX(0.860);">5</span>
<span class="t" style="left:8.5px;top:323.2px;font-size:13.2px;line-height:16px;color:#333;font-family:'Liberation Sans',sans-serif;transform:scaleX(0.860);">6</span>
<span class="t" style="left:8.5px;top:346.7px;font-size:13.2px;line-height:16px;color:#333;font-family:'Liberation Sans',sans-serif;transform:scaleX(0.860);">7</span>
<span class="t" style="left:8.5px;top:374.2px;font-size:13.2px;line-height:16px;color:#333;font-family:'Liberation Sans',sans-serif;transform:scaleX(0.860);">8</span>
<span class="t" style="left:8.5px;top:401.7px;font-size:13.2px;line-height:16px;color:#333;font-family:'Liberation Sans',sans-serif;transform:scaleX(0.860);">9</span>
<span class="t" style="left:6.2px;top:425.2px;font-size:13.2px;line-height:16px;color:#333;font-family:'Liberation Sans',sans-serif;transform:scaleX(0.860);">10</span>
<span class="t" style="left:6.6px;top:445.7px;font-size:13.2px;line-height:16px;color:#333;font-family:'Liberation Sans',sans-serif;transform:scaleX(0.860);">11</span>
<span class="t" style="left:6.2px;top:466.7px;font-size:13.2px;line-height:16px;color:#333;font-family:'Liberation Sans',sans-serif;transform:scaleX(0.860);">12</span>
<span class="t" style="left:6.2px;top:487.7px;font-size:13.2px;line-height:16px;color:#333;font-family:'Liberation Sans',sans-serif;transform:scaleX(0.860);">13</span>
<span class="t" style="left:6.2px;top:508.7px;font-size:13.2px;line-height:16px;color:#333;font-family:'Liberation Sans',sans-serif;transform:scaleX(0.860);">14</span>
<span class="t" style="left:6.2px;top:529.2px;font-size:13.2px;line-height:16px;color:#333;font-family:'Liberation Sans',sans-serif;transform:scaleX(0.860);">15</span>
<span class="t" style="left:6.2px;top:549.2px;font-size:13.2px;line-height:16px;color:#333;font-family:'Liberation Sans',sans-serif;transform:scaleX(0.860);">16</span>
<span class="t" style="left:6.2px;top:571.7px;font-size:13.2px;line-height:16px;color:#333;font-family:'Liberation Sans',sans-serif;transform:scaleX(0.860);">17</span>
<span class="t" style="left:6.2px;top:594.2px;font-size:13.2px;line-height:16px;color:#333;font-family:'Liberation Sans',sans-serif;transform:scaleX(0.860);">18</span>
<span class="t" style="left:6.2px;top:614.2px;font-size:13.2px;line-height:16px;color:#333;font-family:'Liberation Sans',sans-serif;transform:scaleX(0.860);">19</span>
<span class="t" style="left:6.2px;top:634.2px;font-size:13.2px;line-height:16px;color:#333;font-family:'Liberation Sans',sans-serif;transform:scaleX(0.860);">20</span>
<span class="t" style="left:6.2px;top:654.2px;font-size:13.2px;line-height:16px;color:#333;font-family:'Liberation Sans',sans-serif;transform:scaleX(0.860);">21</span>
<div class="b" style="left:84px;top:566.5px;width:278px;height:25px;background:#8cbd4f;"></div>
<div class="b" style="left:82px;top:504px;width:282px;height:23px;border:2px solid #217346;box-sizing:border-box;"></div>
<div class="b" style="left:360px;top:523px;width:6px;height:6px;background:#217346;border:1px solid #fff;box-sizing:border-box;"></div>
<span class="t" style="left:86.5px;top:349.0px;font-size:13.2px;line-height:16px;color:#1a1a1a;font-family:'Liberation Sans',sans-serif;transform:scaleX(1.013);">Ejemplo:</span>
<span class="t" style="left:87.0px;top:373.6px;font-size:16px;line-height:19px;color:#1a1a1a;font-family:'Liberation Sans',sans-serif;transform:scaleX(1.013);">Convertir 450 W a Amperes</span>
<span class="t" style="left:86.5px;top:403.7px;font-size:13.2px;line-height:16px;color:#1a1a1a;font-family:'Liberation Sans',sans-serif;transform:scaleX(1.027);">110 Volts / 0.90 FP</span>
<span class="t" style="left:456.5px;top:344.3px;font-size:17.4px;line-height:21px;color:#1a1a1a;font-family:'Liberation Sans',sans-serif;transform:scaleX(1.035);">W</span>
<span class="t" style="left:450.0px;top:372.1px;font-size:17.4px;line-height:21px;color:#1a1a1a;font-family:'Liberation Sans',sans-serif;transform:scaleX(1.068);">450</span>
<span class="t" style="left:514.0px;top:344.3px;font-size:17.4px;line-height:21px;color:#1a1a1a;font-family:'Liberation Sans',sans-serif;">V * cos Ө</span>
<span class="t" style="left:514.0px;top:372.1px;font-size:17.4px;line-height:21px;color:#1a1a1a;font-family:'Liberation Sans',sans-serif;transform:scaleX(1.075);">110 * 0.9</span>
<span class="t" style="left:775.0px;top:263.7px;font-size:13.2px;line-height:16px;color:#1a1a1a;font-family:'Liberation Sans',sans-serif;transform:scaleX(0.923);">W</span>
<span class="t" style="left:835.0px;top:263.7px;font-size:13.2px;line-height:16px;color:#1a1a1a;font-family:'Liberation Sans',sans-serif;transform:scaleX(0.993);">Watts</span>
<span class="t" style="left:775.0px;top:283.7px;font-size:13.2px;line-height:16px;color:#1a1a1a;font-family:'Liberation Sans',sans-serif;transform:scaleX(0.852);">V</span>
<span class="t" style="left:835.0px;top:283.7px;font-size:13.2px;line-height:16px;color:#1a1a1a;font-family:'Liberation Sans',sans-serif;transform:scaleX(1.035);">Voltaje</span>
<span class="t" style="left:775.3px;top:303.7px;font-size:13.2px;line-height:16px;color:#1a1a1a;font-family:'Liberation Sans',sans-serif;">I</span>
<span class="t" style="left:835.0px;top:303.7px;font-size:13.2px;line-height:16px;color:#1a1a1a;font-family:'Liberation Sans',sans-serif;transform:scaleX(0.993);">Intensidad de Corriente (Amperes)</span>
<span class="t" style="left:774.5px;top:323.7px;font-size:13.2px;line-height:16px;color:#1a1a1a;font-family:'Liberation Sans',sans-serif;transform:scaleX(0.885);">cos Ө</span>
<span class="t" style="left:835.0px;top:323.7px;font-size:13.2px;line-height:16px;color:#1a1a1a;font-family:'Liberation Sans',sans-serif;transform:scaleX(0.938);">Factor de Potencia (FP)</span>
<span class="t" style="left:86.5px;top:446.7px;font-size:13.2px;line-height:16px;color:#1a1a1a;font-family:'Liberation Sans',sans-serif;transform:scaleX(1.042);">Desarrollar fórmula</span>
<span class="t" style="left:86.5px;top:467.7px;font-size:13.2px;line-height:16px;color:#1a1a1a;font-family:'Liberation Sans',sans-serif;transform:scaleX(1.044);">1. 110*0.90 = 99</span>
<span class="t" style="left:86.5px;top:488.7px;font-size:13.2px;line-height:16px;color:#1a1a1a;font-family:'Liberation Sans',sans-serif;transform:scaleX(1.031);">2. Dividir numerador sobre denominador</span>
<span class="t" style="left:86.5px;top:509.2px;font-size:13.2px;line-height:16px;color:#1a1a1a;font-family:'Liberation Sans',sans-serif;transform:scaleX(1.034);">3. 450 / 99</span>
<span class="t" style="left:86.5px;top:530.2px;font-size:13.2px;line-height:16px;color:#1a1a1a;font-family:'Liberation Sans',sans-serif;transform:scaleX(1.012);">4. I = 4.5454 A</span>
<span class="t" style="left:146.0px;top:571.5px;font-size:14.7px;line-height:18px;color:#111;font-family:'Liberation Sans',sans-serif;font-weight:bold;transform:scaleX(1.058);">Resultado = 4.5454 A</span>
<svg style="left:196.500px;top:552.500px" width="14" height="14" viewBox="0 0 14 14"><path d="M5 1h4v4h4v4h-4v4h-4v-4h-4v-4h4z" fill="#fff" stroke="#000" stroke-width="1.200"/></svg>
<div class="b" style="left:506px;top:464px;width:385px;height:61px;background:#fff;border:1px solid #b4bf98;box-sizing:border-box;"></div>
<div class="b" style="left:593px;top:546px;width:239px;height:81px;background:#fff;border:1px solid #b4bf98;box-sizing:border-box;"></div>
<span class="t" style="left:541.5px;top:466.2px;font-size:37px;line-height:44px;color:#111;font-family:'Liberation Serif',serif;transform:scaleX(0.995);-webkit-text-stroke:.45px #111;">Watts</span>
<span class="t" style="left:637.5px;top:466.2px;font-size:37px;line-height:44px;color:#111;font-family:'Liberation Serif',serif;transform:scaleX(1.078);-webkit-text-stroke:.45px #111;">=</span>
<span class="t" style="left:670.3px;top:466.2px;font-size:37px;line-height:44px;color:#111;font-family:'Liberation Serif',serif;transform:scaleX(0.737);-webkit-text-stroke:.45px #111;">V</span>
<span class="t" style="left:699.5px;top:472.1px;font-size:28px;line-height:34px;color:#111;font-family:'DejaVu Serif',serif;">∗</span>
<span class="t" style="left:725.6px;top:466.2px;font-size:37px;line-height:44px;color:#111;font-family:'Liberation Serif',serif;transform:scaleX(0.763);-webkit-text-stroke:.45px #111;">I</span>
<span class="t" style="left:743.9px;top:472.1px;font-size:28px;line-height:34px;color:#111;font-family:'DejaVu Serif',serif;">∗</span>
<span class="t" style="left:777.5px;top:466.2px;font-size:37px;line-height:44px;color:#111;font-family:'Liberation Serif',serif;transform:scaleX(0.931);-webkit-text-stroke:.45px #111;">cos</span>
<span class="t" style="left:834.4px;top:466.2px;font-size:37px;line-height:44px;color:#111;font-family:'Liberation Serif',serif;transform:scaleX(1.106);-webkit-text-stroke:.45px #111;">θ</span>
<span class="t" style="left:630.0px;top:568.8px;font-size:29.5px;line-height:35px;color:#111;font-family:'Liberation Serif',serif;font-style:italic;transform:scaleX(1.120);-webkit-text-stroke:.35px #111;">I</span>
<span class="t" style="left:652.5px;top:568.8px;font-size:29.5px;line-height:35px;color:#111;font-family:'Liberation Serif',serif;transform:scaleX(1.166);-webkit-text-stroke:.35px #111;">=</span>
<div class="b" style="left:682px;top:586px;width:112px;height:1.6px;background:#111;"></div>
<span class="t" style="left:724.5px;top:545.1px;font-size:28.5px;line-height:34px;color:#111;font-family:'Liberation Serif',serif;font-style:italic;transform:scaleX(1.158);-webkit-text-stroke:.35px #111;">W</span>
<span class="t" style="left:681.0px;top:590.1px;font-size:28.5px;line-height:34px;color:#111;font-family:'Liberation Serif',serif;font-style:italic;transform:scaleX(1.063);-webkit-text-stroke:.35px #111;">V</span>
<span class="t" style="left:707.3px;top:591.7px;font-size:25.5px;line-height:31px;color:#111;font-family:'DejaVu Serif',serif;">∗</span>
<span class="t" style="left:731.2px;top:590.1px;font-size:28.5px;line-height:34px;color:#111;font-family:'Liberation Serif',serif;transform:scaleX(1.006);-webkit-text-stroke:.35px #111;">cos</span>
<span class="t" style="left:777.0px;top:590.1px;font-size:28.5px;line-height:34px;color:#111;font-family:'Liberation Serif',serif;font-style:italic;transform:scaleX(1.143);-webkit-text-stroke:.35px #111;">θ</span>
<svg style="left:1030px;top:425px" width="228" height="245" viewBox="1030 425 228 245">
<ellipse cx="1147.5" cy="545.6" rx="96" ry="103" fill="#fff" fill-opacity=".45"/>
<ellipse cx="1147.5" cy="545.6" rx="96.2" ry="103.2" fill="none" stroke="#d2d2d2" stroke-opacity=".93" stroke-width="19.5"/>
<path d="M1077.1 522.5C1076.3 523.6 1073.8 526.9 1072.2 529.4C1070.6 531.9 1068.4 534.8 1067.4 537.8C1066.4 540.8 1066.0 544.0 1066.0 547.5C1066.0 551.0 1066.4 554.7 1067.4 558.6C1068.4 562.5 1070.1 567.2 1072.2 571.1C1074.3 575.0 1076.9 578.7 1079.9 582.2C1082.9 585.7 1086.7 589.5 1090.3 591.9C1093.9 594.3 1097.9 595.3 1101.4 596.6C1104.9 597.9 1108.0 599.1 1111.1 599.9C1114.2 600.7 1118.3 601.1 1119.8 601.3L1120.0 598.9C1118.8 598.5 1114.6 597.6 1112.5 596.8C1110.4 596.0 1108.1 595.7 1107.6 594.2C1107.1 592.7 1109.3 590.3 1109.7 587.8C1110.1 585.3 1110.4 582.6 1109.7 579.4C1109.0 576.1 1107.4 571.8 1105.6 568.3C1103.8 564.8 1101.4 561.6 1098.6 558.6C1095.8 555.6 1091.8 553.3 1088.9 550.3C1086.0 547.3 1083.1 543.9 1081.2 540.6C1079.4 537.4 1078.5 533.8 1077.8 530.8C1077.1 527.8 1077.2 523.9 1077.1 522.5z" fill="#8ccb58"/>
<path d="M1070.8 537.8C1071.0 540.1 1071.0 547.1 1072.2 551.7C1073.4 556.3 1075.2 561.0 1077.8 565.6C1080.3 570.2 1084.3 575.5 1087.5 579.4C1090.7 583.3 1094.2 586.5 1097.2 589.2C1100.2 591.9 1104.2 594.4 1105.6 595.4" fill="none" stroke="#3aa62a" stroke-width="1.300"/>
<path d="M1221.8 520.0C1222.2 521.3 1223.6 525.4 1224.2 528.0C1224.8 530.6 1224.9 532.7 1225.6 535.7C1226.3 538.7 1227.9 542.8 1228.3 546.1C1228.7 549.5 1228.6 552.1 1228.0 555.8C1227.4 559.5 1226.2 564.4 1224.6 568.3C1223.0 572.2 1221.0 575.9 1218.3 579.4C1215.6 582.9 1212.1 586.7 1208.6 589.2C1205.1 591.8 1201.4 593.7 1197.5 594.7C1193.6 595.7 1189.0 595.8 1185.0 595.4C1181.0 595.0 1175.2 592.7 1173.2 592.2C1174.5 591.5 1178.4 589.7 1180.8 587.8C1183.2 585.9 1185.8 583.8 1187.8 580.8C1189.8 577.8 1191.3 573.4 1192.6 569.7C1193.9 566.0 1194.1 562.3 1195.4 558.6C1196.7 554.9 1198.3 550.7 1200.3 547.5C1202.3 544.3 1204.7 541.3 1207.2 539.2C1209.8 537.1 1213.0 535.8 1215.6 535.0C1218.2 534.2 1221.7 535.5 1222.6 534.2C1223.5 532.9 1221.3 529.3 1220.8 527.0C1220.3 524.7 1219.8 521.4 1219.6 520.3z" fill="#8ccb58"/>
<path d="M1224.2 535.0C1223.9 537.3 1223.5 544.3 1222.5 548.9C1221.5 553.5 1220.1 558.4 1218.3 562.8C1216.5 567.2 1214.2 571.6 1211.4 575.3C1208.6 579.0 1204.9 582.5 1201.7 585.0C1198.5 587.5 1193.6 589.7 1192.0 590.6" fill="none" stroke="#3aa62a" stroke-width="1.300"/>
<g fill="none" stroke="#2a2a2a" stroke-width="2" stroke-linecap="round" stroke-linejoin="round">
<path d="M1132.500 548.500c-1-10-17-15-17-36a32 32 0 0 1 64 0c0 21-15 26-16 36z" fill="#fff" fill-opacity=".7"/>
<path d="M1124 548.500h47"/>
<path d="M1155.300 502l-15 15.500h14.400l-14 15v16M1152 531.600v16.500"/>
<path d="M1147 454.700v12.300M1107 473.400l9 8.100M1186.600 472l-8.600 8.600M1091.500 515h11.300M1191.700 513h11.300M1116 548.400l-7.600 8.600M1179 547l8 8.400"/>
</g>
<path d="M1131 549h33.500c0 12-6 21-16.800 21s-16.700-9-16.700-21z" fill="#f6b343" stroke="#2a2a2a" stroke-width="2"/>
<path d="M1131.500 556h32.500M1133.500 562.500h28.500" stroke="#2a2a2a" stroke-width="1.600"/>
</svg>
<span class="t" style="left:1060.0px;top:603.3px;font-size:22.3px;line-height:27px;color:#6e6e6e;font-family:'Liberation Sans',sans-serif;transform:scaleX(0.721);-webkit-text-stroke:.55px #6e6e6e;">Soluciones Sustentables</span>
<div class="b" style="left:1257px;top:221px;width:2px;height:451px;background:#c6c6c6;"></div>
<div class="b" style="left:1259px;top:201px;width:21px;height:471px;background:#e6e6e6;"></div>
<div class="b" style="left:1261px;top:619px;width:14px;height:40px;background:#c8c8c8;"></div>
<div class="b" style="left:1261px;top:218px;width:14px;height:402px;background:#fff;border:1px solid #c6c6c6;box-sizing:border-box;"></div>
<div class="b" style="left:1261px;top:203px;width:14px;height:15px;background:#fff;border:1px solid #c6c6c6;box-sizing:border-box;"></div>
<div class="b" style="left:1261px;top:659px;width:14px;height:14px;background:#fff;border:1px solid #c6c6c6;box-sizing:border-box;"></div>
<svg style="left:1263px;top:207px" width="10" height="8" viewBox="0 0 10 8"><path d="M1.500 6l3.500-4 3.500 4z" fill="#777"/></svg>
<svg style="left:1263px;top:662px" width="10" height="8" viewBox="0 0 10 8"><path d="M1.500 2l3.500 4 3.500-4z" fill="#555"/></svg>
<!-- tabs & status -->
<div class="b" style="left:0px;top:672px;width:1280px;height:28px;background:#e6e6e6;"></div>
<div class="b" style="left:0px;top:671px;width:1258px;height:1.5px;background:#b4b4b4;"></div>
<div class="b" style="left:0px;top:700px;width:1280px;height:20px;background:#f3f3f3;"></div>
<div class="b" style="left:0px;top:699.5px;width:1280px;height:1px;background:#d4d4d4;"></div>
<div class="b" style="left:652px;top:671px;width:120px;height:25px;background:#fff;"></div>
<div class="b" style="left:651.5px;top:672.5px;width:1px;height:23px;background:#b4b4b4;"></div>
<div class="b" style="left:771.5px;top:672.5px;width:1px;height:23px;background:#b4b4b4;"></div>
<div class="b" style="left:652px;top:694.5px;width:120px;height:2px;background:#1e6540;"></div>
<span class="t" style="left:109.0px;top:678.1px;font-size:12.9px;line-height:15px;color:#444;font-family:'Liberation Sans',sans-serif;transform:scaleX(0.955);">Watts - KiloWatts</span>
<span class="t" style="left:233.5px;top:678.1px;font-size:12.9px;line-height:15px;color:#444;font-family:'Liberation Sans',sans-serif;transform:scaleX(0.960);">kiloWatts - Watts</span>
<span class="t" style="left:354.5px;top:678.1px;font-size:12.9px;line-height:15px;color:#444;font-family:'Liberation Sans',sans-serif;transform:scaleX(0.941);">HP - Watts</span>
<span class="t" style="left:440.0px;top:678.1px;font-size:12.9px;line-height:15px;color:#444;font-family:'Liberation Sans',sans-serif;transform:scaleX(0.929);">Watts - HP</span>
<span class="t" style="left:525.0px;top:678.1px;font-size:12.9px;line-height:15px;color:#444;font-family:'Liberation Sans',sans-serif;transform:scaleX(0.906);">kW - HP</span>
<span class="t" style="left:595.0px;top:678.1px;font-size:12.9px;line-height:15px;color:#444;font-family:'Liberation Sans',sans-serif;transform:scaleX(0.910);">HP - kW</span>
<span class="t" style="left:784.0px;top:678.1px;font-size:12.9px;line-height:15px;color:#444;font-family:'Liberation Sans',sans-serif;transform:scaleX(0.945);">Watts - KVA</span>
<span class="t" style="left:877.5px;top:678.1px;font-size:12.9px;line-height:15px;color:#444;font-family:'Liberation Sans',sans-serif;transform:scaleX(0.968);">KVA - Watts aqui</span>
<span class="t" style="left:998.5px;top:678.1px;font-size:12.9px;line-height:15px;color:#444;font-family:'Liberation Sans',sans-serif;transform:scaleX(0.928);">kW - kVA</span>
<span class="t" style="left:1075.0px;top:678.1px;font-size:12.9px;line-height:15px;color:#444;font-family:'Liberation Sans',sans-serif;transform:scaleX(0.940);">KVA - kW</span>
<span class="t" style="left:1152.5px;top:678.1px;font-size:12.9px;line-height:15px;color:#444;font-family:'Liberation Sans',sans-serif;transform:scaleX(0.853);">k</span>
<span class="t" style="left:663.5px;top:678.1px;font-size:12.5px;line-height:15px;color:#217346;font-family:'Liberation Sans',sans-serif;font-weight:bold;transform:scaleX(0.988);">Watts - Amperes</span>
<div class="b" style="left:93.5px;top:676px;width:1px;height:19px;background:#ababab;"></div>
<div class="b" style="left:218px;top:676px;width:1px;height:19px;background:#ababab;"></div>
<div class="b" style="left:341px;top:676px;width:1px;height:19px;background:#ababab;"></div>
<div class="b" style="left:427px;top:676px;width:1px;height:19px;background:#ababab;"></div>
<div class="b" style="left:512px;top:676px;width:1px;height:19px;background:#ababab;"></div>
<div class="b" style="left:582px;top:676px;width:1px;height:19px;background:#ababab;"></div>
<div class="b" style="left:863px;top:676px;width:1px;height:19px;background:#ababab;"></div>
<div class="b" style="left:984.5px;top:676px;width:1px;height:19px;background:#ababab;"></div>
<div class="b" style="left:1062px;top:676px;width:1px;height:19px;background:#ababab;"></div>
<div class="b" style="left:1139.5px;top:676px;width:1px;height:19px;background:#ababab;"></div>
<span class="t" style="left:1165.0px;top:678.6px;font-size:13px;line-height:16px;color:#1e6b45;font-family:'Liberation Sans',sans-serif;font-weight:bold;transform:scaleX(1.107);">...</span>
<svg style="left:20px;top:680px" width="40" height="11" viewBox="0 0 40 11"><path d="M9 1.500v8l-4-4z" fill="#c9c9c9"/><path d="M31.500 1.500v8l4-4z" fill="#217346"/></svg>
<svg style="left:1188px;top:677px" width="17" height="17" viewBox="0 0 17 17" fill="none" stroke="#666" stroke-width="1.100"><circle cx="8.500" cy="8.500" r="7"/><path d="M8.500 4.500v8M4.500 8.500h8"/></svg>
<div class="b" style="left:1223px;top:681px;width:1.5px;height:1.5px;background:#c4c4c4;"></div>
<div class="b" style="left:1223px;top:684.5px;width:1.5px;height:1.5px;background:#c4c4c4;"></div>
<div class="b" style="left:1223px;top:688px;width:1.5px;height:1.5px;background:#c4c4c4;"></div>
<div class="b" style="left:1223px;top:691.5px;width:1.5px;height:1.5px;background:#c4c4c4;"></div>
<div class="b" style="left:1239px;top:680px;width:9px;height:14px;background:#fff;border:1px solid #cfcfcf;box-sizing:border-box;"></div>
<div class="b" style="left:1250px;top:680px;width:10px;height:14px;background:#fff;border:1px solid #cfcfcf;box-sizing:border-box;"></div>
<svg style="left:1239px;top:680px" width="23" height="14" viewBox="0 0 23 14"><path d="M6 4v6l-3-3z" fill="#666"/><path d="M14.500 4v6l3-3z" fill="#555"/></svg>
<span class="t" style="left:7.5px;top:703.6px;font-size:11.7px;line-height:14px;color:#444;font-family:'Liberation Sans',sans-serif;transform:scaleX(0.890);">Listo</span>
<div class="b" style="left:1011px;top:700px;width:35px;height:20px;background:#c8c8c8;"></div>
<svg style="left:1012px;top:700px" width="110" height="20" viewBox="0 0 110 20" fill="none" stroke="#555" stroke-width="1">
<rect x="9.500" y="4.500" width="13" height="11"/><path d="M9.500 8h13M9.500 11.500h13M14 4.500v11M18 4.500v11"/>
<rect x="46.500" y="4.500" width="11" height="11"/><path d="M49 7.500h6M49 10h6M49 12.500h6"/>
<rect x="80.500" y="4.500" width="13" height="11"/><path d="M84.500 4.500v7h5v-7M80.500 11.500h4"/></svg>
<div class="b" style="left:1121px;top:709.5px;width:6.5px;height:1.6px;background:#444;"></div>
<div class="b" style="left:1132px;top:710px;width:92px;height:1px;background:#8a8a8a;"></div>
<div class="b" style="left:1176.5px;top:704px;width:4px;height:12px;background:#555;"></div>
<div class="b" style="left:1227.5px;top:709.5px;width:7.5px;height:1.6px;background:#444;"></div>
<div class="b" style="left:1230.5px;top:706.5px;width:1.6px;height:7.5px;background:#444;"></div>
<span class="t" style="left:1246.0px;top:703.6px;font-size:11.7px;line-height:14px;color:#444;font-family:'Liberation Sans',sans-serif;transform:scaleX(0.802);">100%</span>
<div class="b" style="left:1278px;top:0px;width:2px;height:720px;background:#000;"></div>
<div class="b" style="left:1277px;top:63px;width:1px;height:657px;background:#f6f6f6;"></div>
</body></html>
